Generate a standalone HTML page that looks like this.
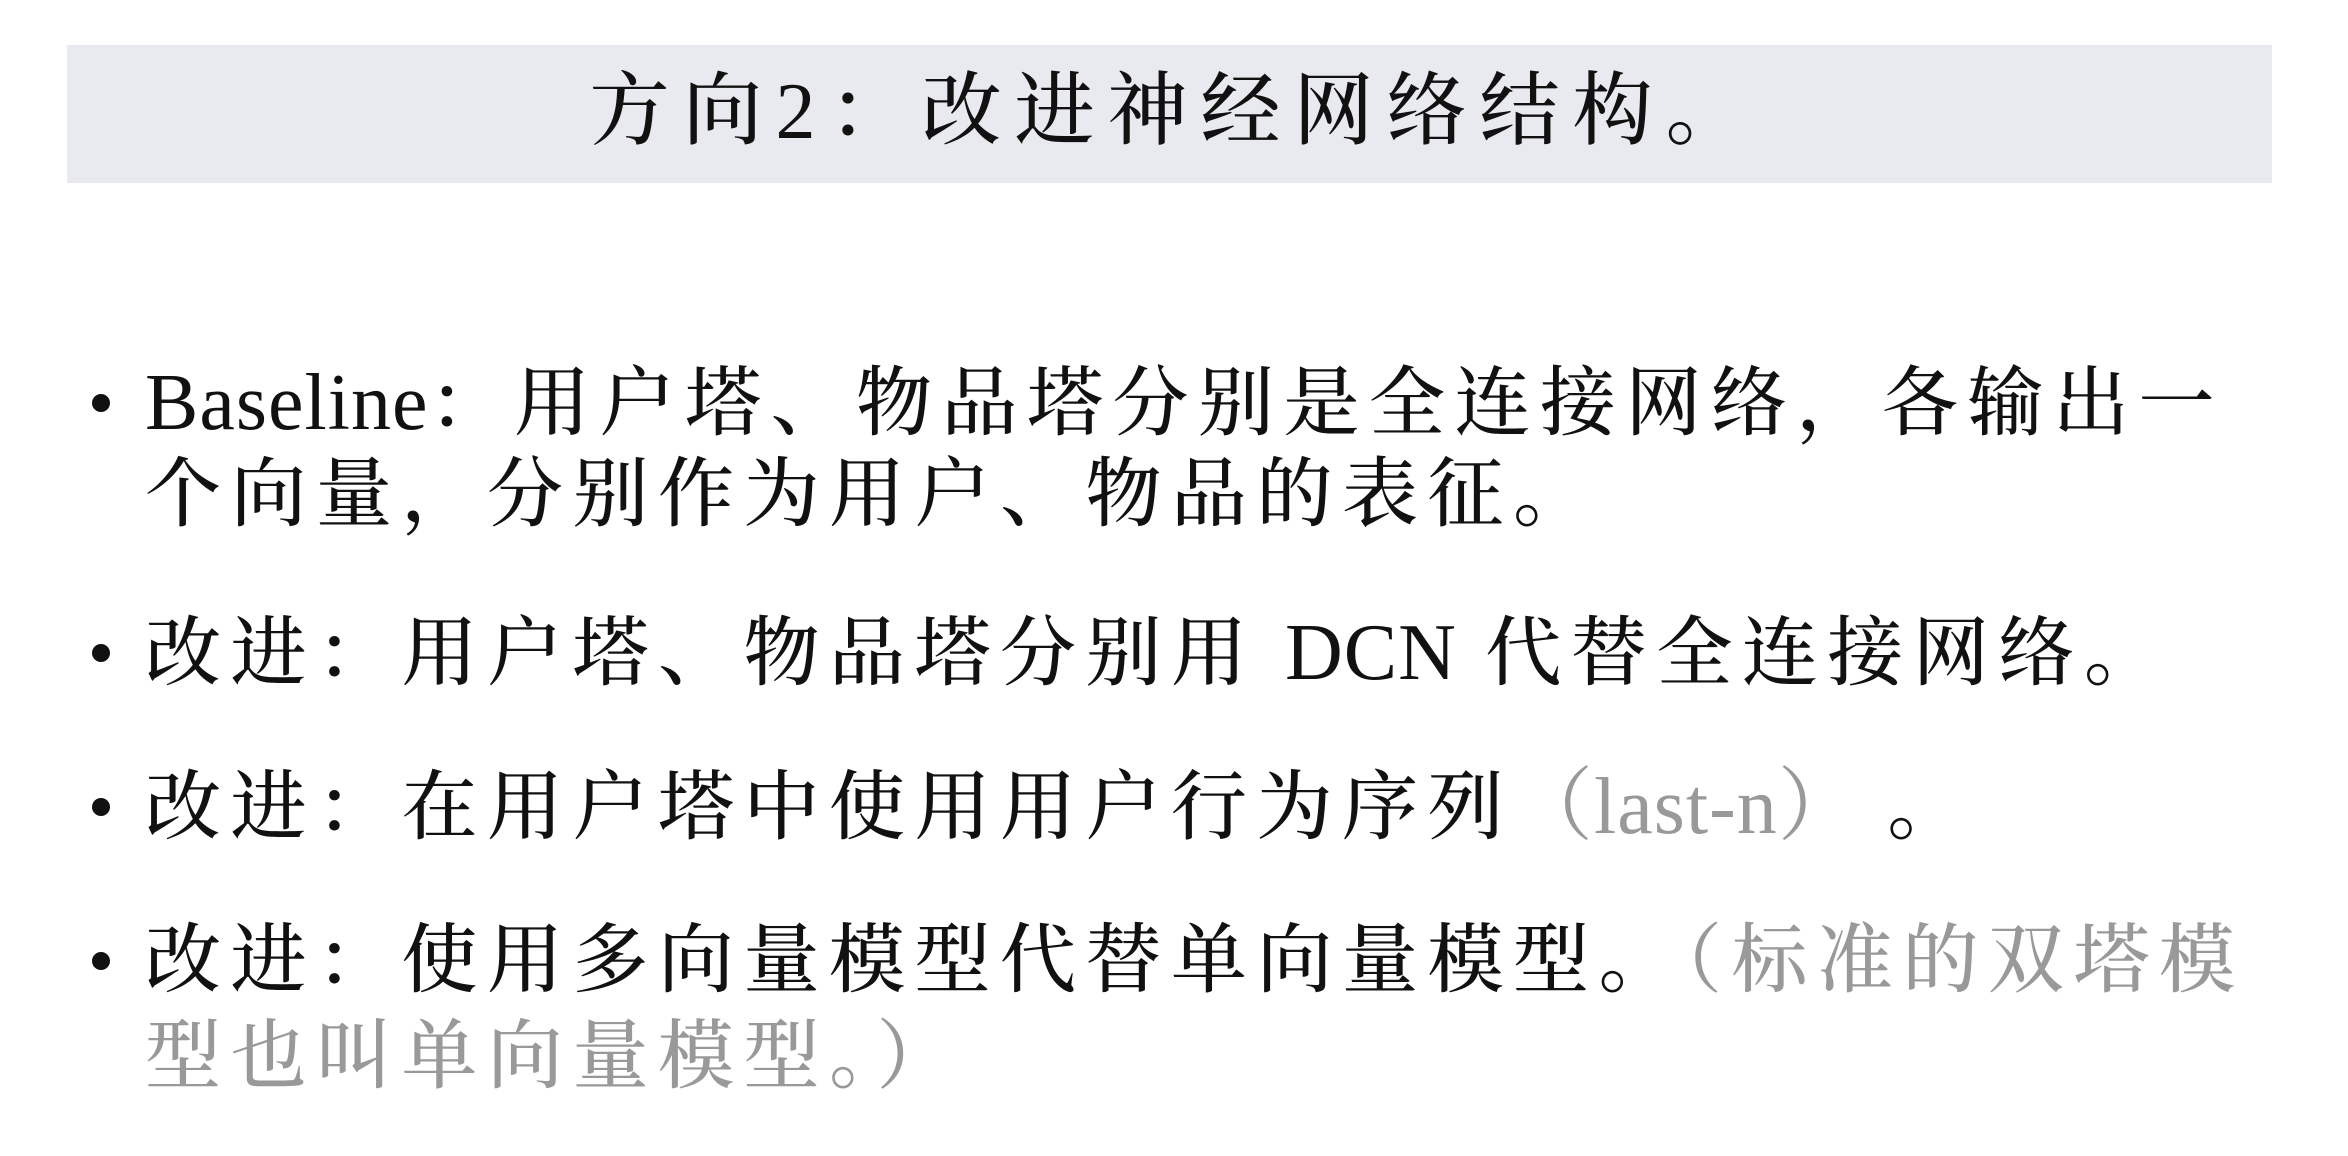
<!DOCTYPE html>
<html><head><meta charset="utf-8"><style>
body{margin:0;width:2348px;height:1156px;background:#fff;position:relative;overflow:hidden;font-family:"Liberation Serif","Noto Serif CJK SC",serif;color:#111}
.band{position:absolute;left:67px;top:45px;width:2205px;height:138px;background:#e8eaef}
.title{position:absolute;left:0;width:2348px;top:62px;text-align:center;font-size:80px;letter-spacing:13px;line-height:100px;font-weight:500}
.l{position:absolute;left:145px;font-size:76px;letter-spacing:9.5px;line-height:90px;white-space:nowrap;font-weight:500}
.d{position:absolute;left:92px;width:18px;height:18px;border-radius:50%;background:#111}
.g{color:#999}
.lat{font-size:80px;letter-spacing:1px;font-weight:400}
</style></head><body>
<div class="band"></div>
<div class="title">方向<span style="font-weight:400">2</span>：改进神经网络结构。</div>
<div class="d" style="top:394px"></div>
<div class="l" style="top:358px"><span class="lat">Baseline</span>：用户塔、物品塔分别是全连接网络，各输出一</div>
<div class="l" style="top:450px">个向量，分别作为用户、物品的表征。</div>
<div class="d" style="top:644px"></div>
<div class="l" style="top:608px">改进：用户塔、物品塔分别用 <span class="lat">DCN</span> 代替全连接网络。</div>
<div class="d" style="top:798px"></div>
<div class="l" style="top:762px">改进：在用户塔中使用用户行为序列<span class="g lat">（last-n）</span> 。</div>
<div class="d" style="top:952px"></div>
<div class="l" style="top:916px">改进：使用多向量模型代替单向量模型。<span class="g">（标准的双塔模</span></div>
<div class="l g" style="top:1012px">型也叫单向量模型。）</div>
</body></html>
